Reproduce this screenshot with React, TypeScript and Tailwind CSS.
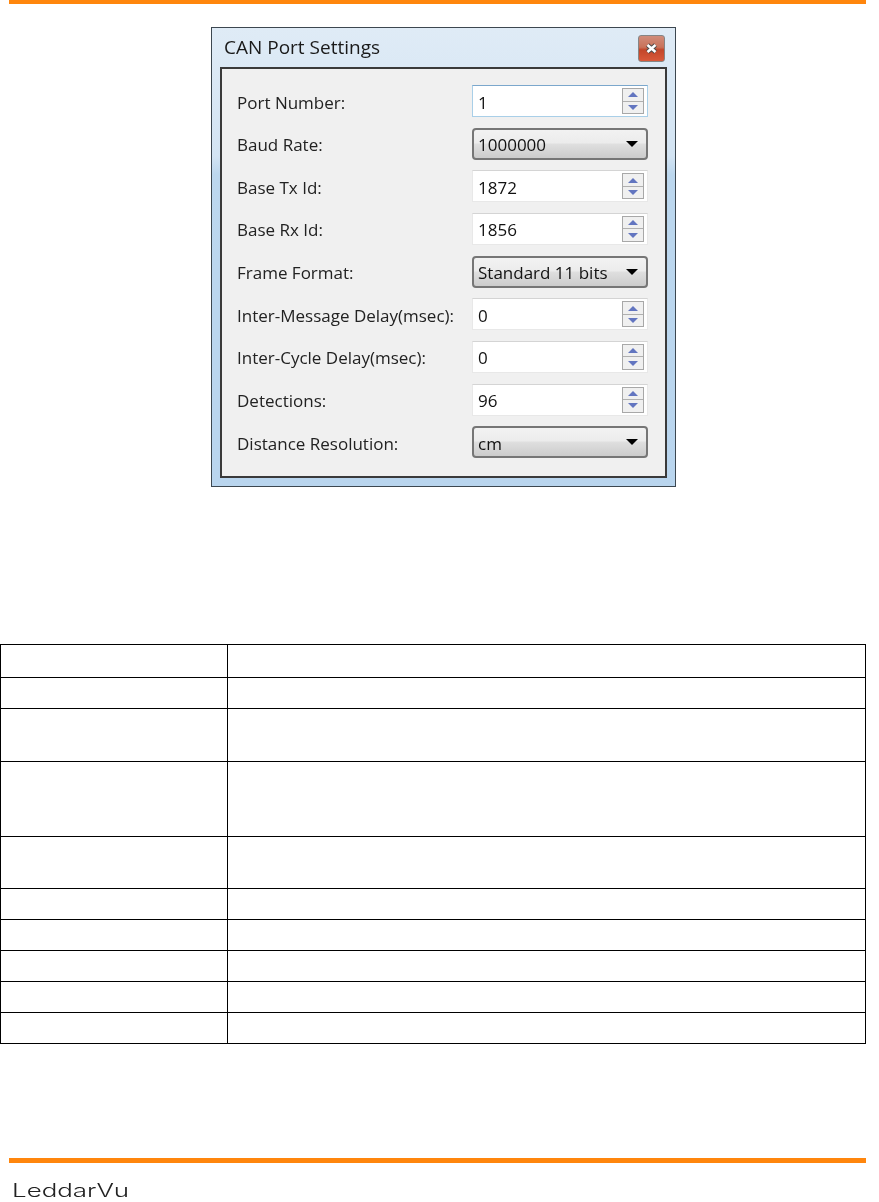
const FIELDS = [
  { label: 'Port Number:', value: '1', kind: 'spin', focused: true },
  { label: 'Baud Rate:', value: '1000000', kind: 'combo' },
  { label: 'Base Tx Id:', value: '1872', kind: 'spin' },
  { label: 'Base Rx Id:', value: '1856', kind: 'spin' },
  { label: 'Frame Format:', value: 'Standard 11 bits', kind: 'combo' },
  { label: 'Inter-Message Delay(msec):', value: '0', kind: 'spin' },
  { label: 'Inter-Cycle Delay(msec):', value: '0', kind: 'spin' },
  { label: 'Detections:', value: '96', kind: 'spin' },
  { label: 'Distance Resolution:', value: 'cm', kind: 'combo' },
];

const ROW_HEIGHTS = ['h-[33px]', 'h-[31px]', 'h-[53px]', 'h-[75px]', 'h-[52px]', 'h-[31px]', 'h-[31px]', 'h-[31px]', 'h-[31px]', 'h-[30px]'];

function SpinBox({ value, focused }: { value: string; focused?: boolean }) {
  return (
    <div
      className={`flex h-[32px] w-[176px] items-center border pl-[5px] pr-[3px] bg-white ${
        focused ? 'border-[#a9cfe8] border-t-[#7ba7cc]' : 'border-[#e8e8e8] border-t-[#d4d4d4]'
      }`}
    >
      <span className="flex-1 pt-[2px] text-[17px] leading-none text-[#111]">{value}</span>
      <div className="flex h-[26px] w-[22px] flex-col border border-[#a8a8a8] bg-[#f0f0f0]">
        <div className="flex flex-1 items-center justify-center border-b border-[#b0b0b0]">
          <div className="h-0 w-0 border-x-[5px] border-b-[5px] border-x-transparent border-b-[#6275c0]" />
        </div>
        <div className="flex flex-1 items-center justify-center">
          <div className="h-0 w-0 border-x-[5px] border-t-[5px] border-x-transparent border-t-[#6275c0]" />
        </div>
      </div>
    </div>
  );
}

function ComboBox({ value }: { value: string }) {
  return (
    <div className="flex h-[32px] w-[176px] items-center justify-between rounded-[4px] border-2 border-[#767676] bg-[linear-gradient(#f2f2f2,#ececec_45%,#dedede_52%,#cccccc)] pl-[4px] pr-[8px]">
      <span className="pt-[2px] text-[17px] leading-none text-[#111]">{value}</span>
      <div className="h-0 w-0 border-x-[6px] border-t-[6px] border-x-transparent border-t-black" />
    </div>
  );
}

export default function App() {
  return (
    <div className="flex h-[1202px] w-[879px] flex-col overflow-hidden bg-white font-['Open_Sans','Liberation_Sans',sans-serif]">
      <div className="ml-[9px] h-[4px] w-[857px] shrink-0 bg-[#ff860d]" />

      <div className="mt-[23px] ml-[211px] flex h-[460px] w-[465px] shrink-0 flex-col border border-[#3c4750] bg-[linear-gradient(#dfebf6,#d3e4f3_28%,#bcd7ee_32%,#b9d5ee)] px-[8px] pb-[8px] blur-[0.35px]">
        <div className="flex h-[39px] items-center justify-between pl-[4px] pr-[2px]">
          <span className="text-[19px] leading-none text-[#1a1a1a]">CAN Port Settings</span>
          <div className="mt-[2px] flex h-[27px] w-[27px] items-center justify-center rounded-[3px] border border-[#858585] bg-[linear-gradient(#d08c7a,#c9725a_45%,#c2462a_55%,#d9593a)]">
            <svg width="13" height="11" viewBox="0 0 13 11">
              <path d="M2.5 2 L10.5 9 M10.5 2 L2.5 9" stroke="#4a4a4a" strokeWidth="4.5" />
              <path d="M2.5 2 L10.5 9 M10.5 2 L2.5 9" stroke="#ffffff" strokeWidth="2.5" />
            </svg>
          </div>
        </div>
        <div className="flex flex-1 flex-col border-2 border-[#3a3a3a] bg-[#f0f0f0] pl-[15px] pr-[17px] pt-[16px]">
          {FIELDS.map((f) => (
            <div key={f.label} className="flex h-[42.67px] items-start justify-between">
              <span className="flex h-[32px] items-center pt-[2px] text-[17px] leading-none text-[#222]">{f.label}</span>
              {f.kind === 'spin' ? <SpinBox value={f.value} focused={f.focused} /> : <ComboBox value={f.value} />}
            </div>
          ))}
        </div>
      </div>

      <div className="mt-[157px] flex w-[866px] shrink-0 flex-col border border-black">
        {ROW_HEIGHTS.map((h, i) => (
          <div key={i} className={`flex ${h} ${i < ROW_HEIGHTS.length - 1 ? 'border-b border-black' : ''}`}>
            <div className="w-[227px] border-r border-black" />
            <div className="flex-1" />
          </div>
        ))}
      </div>

      <div className="mt-[114px] ml-[9px] h-[5px] w-[857px] shrink-0 bg-[#ff860d]" />

      <div className="ml-[12px] mt-[18px] h-[19px] shrink-0 origin-left scale-x-[1.44] self-start font-['Inter',sans-serif] text-[18px] font-light leading-[19px] text-[#222]">LeddarVu</div>
    </div>
  );
}
